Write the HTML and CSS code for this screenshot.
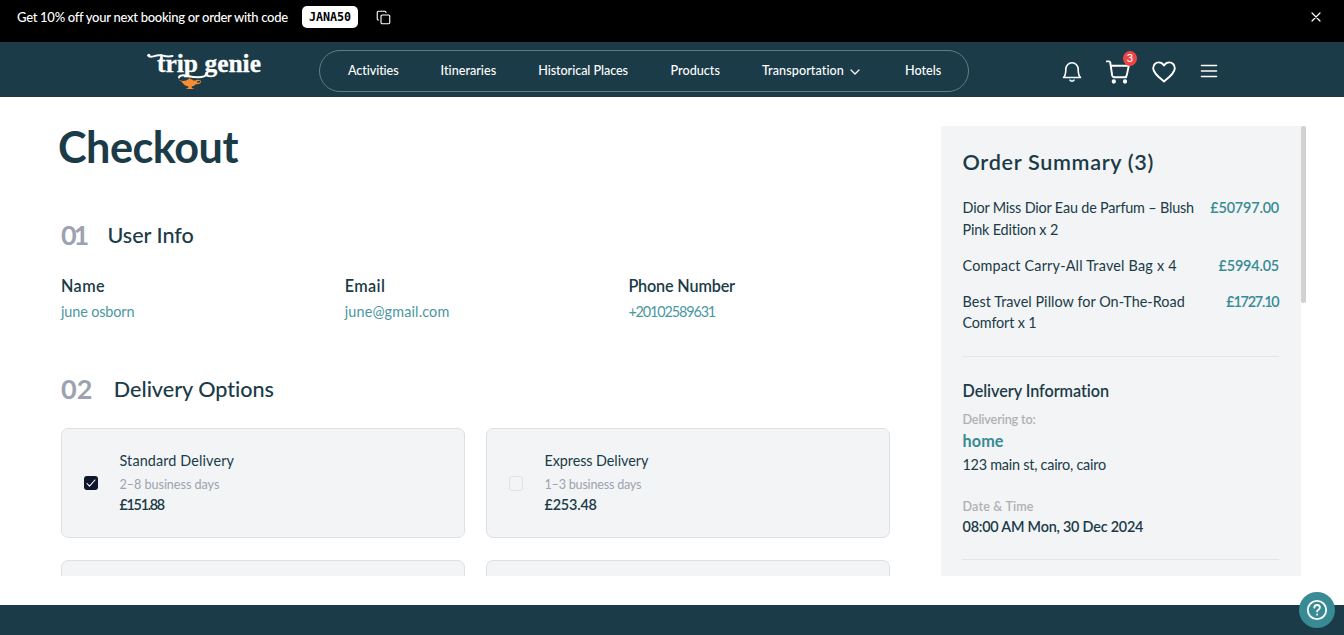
FILE: index.html
```html
<!DOCTYPE html>
<html lang="en">
<head>
<meta charset="utf-8">
<title>Checkout – Trip Genie</title>
<link rel="stylesheet" href="styles.css">
</head>
<body>
<div class="promo">
  <span class="promo-text">Get 10% off your next booking or order with code</span>
  <span class="code">JANA50</span>
  <svg class="copy" viewBox="0 0 24 24"><rect x="8" y="8" width="14" height="14" rx="2"/><path d="M4 16c-1.100 0-2-.9-2-2V4c0-1.100.9-2 2-2h10c1.100 0 2 .9 2 2"/></svg>
  <svg class="close" viewBox="0 0 10 10"><path d="M1 1l8 8M9 1L1 9"/></svg>
</div>
<header class="header">
  <svg class="logo" viewBox="144 48 120 46">
    <text class="logo-text" x="157" y="71.500" textLength="104" lengthAdjust="spacingAndGlyphs">trip genie</text>
    <circle class="swash-dot" cx="148.800" cy="55.300" r="1.600"/>
    <path class="swash" d="M149 56.300c3 1.500 6-1.300 10.500-1 4 .2 7 2 13 .7"/>
    <path class="swash" d="M161.300 55v6"/>
    <path class="swash" d="M179 77.500c0-2 4-2.800 8-1.800 6 1.500 13 2.500 17.500.5 2-1 2.500-2.200 2-3.500"/>
    <path class="lamp" d="M178 79.500l4.500 1.500 4-.5c.5-1 1.500-1.200 2.500-1.200l.8-2 .8 2c1 0 2 .2 2.500 1.200h2.500c1.500-1.500 5.800-1 5.500 1.200-.2 2-3.300 2.700-5.300 2.600-1.200 1.400-2.700 2-4.300 2.200l.5 1.500 2.500 1h-9l2.500-1 .5-1.500c-4-.5-5.500-3-7-5zM197 82.800c1.500 0 3.300-.5 3.400-1.400 0-.9-2-1-3.100-.1z"/>
  </svg>
  <nav class="nav">
    <a class="nav-activities">Activities</a>
    <a>Itineraries</a>
    <a class="nav-places">Historical Places</a>
    <a>Products</a>
    <a class="nav-transport">Transportation<svg class="chevron" viewBox="0 0 10 6"><path d="M1 1l4 4 4-4"/></svg></a>
    <a>Hotels</a>
  </nav>
  <div class="actions">
    <svg class="bell" viewBox="0 0 20 22"><path d="M1.500 16.500c1.800-1.500 2.300-3.500 2.300-8A6.200 6.500 0 0 1 10 1.800a6.200 6.500 0 0 1 6.200 6.700c0 4.500.5 6.500 2.300 8z"/><path d="M8 19.200c.8 1.300 3.200 1.300 4 0"/></svg>
    <span class="cart">
      <svg viewBox="0 0 24 24"><path d="M.8 1.400h2.300c.7 0 1 .4 1.100 1l2 13.100c.2 1.100.8 1.700 1.900 1.700h12M4.800 5.800h18l-2 9.200c-.3 1.400-1 2.200-2.200 2.200"/><circle cx="7.800" cy="21.500" r="1.200"/><circle cx="19" cy="21.500" r="1.200"/></svg>
      <span class="badge">3</span>
    </span>
    <svg class="heart" viewBox="0 0 24 22"><path d="M12 20.500C6.500 15.800 1.200 12 1.200 7.300c0-3.500 2.600-5.900 5.500-5.900 2.200 0 4 1 5.300 3 1.300-2 3.100-3 5.300-3 2.900 0 5.500 2.400 5.500 5.900 0 4.700-5.300 8.500-10.800 13.200z"/></svg>
    <svg class="menu" viewBox="0 0 18 14"><path d="M1.500 1.500h15M1.500 7h15M1.500 12.500h15"/></svg>
  </div>
</header>
<main class="main">
  <section class="checkout">
    <h1>Checkout</h1>
    <div class="step step-user"><span class="num num-one">01</span><h2>User Info</h2></div>
    <div class="fields">
      <div><h3 class="roomy">Name</h3><p>june osborn</p></div>
      <div><h3 class="roomy">Email</h3><p class="mail">june@gmail.com</p></div>
      <div><h3 class="phone-title">Phone Number</h3><p class="phone">+20102589631</p></div>
    </div>
    <div class="step step-delivery"><span class="num">02</span><h2>Delivery Options</h2></div>
    <div class="options">
      <div class="card">
        <span class="box checked"><svg viewBox="0 0 14 14"><path d="M3 7.500l2.500 2.700L11 4"/></svg></span>
        <div class="card-text"><h4 class="std">Standard Delivery</h4><small>2–8 business days</small><b class="price-std">£151.88</b></div>
      </div>
      <div class="card">
        <span class="box"></span>
        <div class="card-text"><h4>Express Delivery</h4><small class="days-exp">1–3 business days</small><b>£253.48</b></div>
      </div>
      <div class="card"></div>
      <div class="card"></div>
    </div>
  </section>
  <aside class="summary">
    <div class="panel">
      <h2>Order Summary (3)</h2>
      <ul class="items">
        <li><span class="item-tight">Dior Miss Dior Eau de Parfum – Blush<br>Pink Edition x 2</span><b>£50797.00</b></li>
        <li><span class="item-wide">Compact Carry-All Travel Bag x 4</span><b>£5994.05</b></li>
        <li><span class="item-mid">Best Travel Pillow for On-The-Road<br><i>Comfort x 1</i></span><b class="price-third">£1727.10</b></li>
      </ul>
      <div class="delivery">
        <h3>Delivery Information</h3>
        <p class="label">Delivering to:</p>
        <p class="place">home</p>
        <p class="address">123 main st, cairo, cairo</p>
        <p class="label label-date">Date &amp; Time</p>
        <p class="date">08:00 AM Mon, 30 Dec 2024</p>
      </div>
    </div>
    <div class="scrollbar"><div class="thumb"></div></div>
  </aside>
</main>
<footer class="footer"></footer>
<button class="help"><svg viewBox="0 0 22 22"><circle cx="11" cy="11" r="9.200"/><path d="M8.300 8.600c.2-3.500 5.600-3.400 5.600 0 0 2.100-2.800 2.200-2.800 4"/><path d="M11.100 15.300v.4"/></svg></button>
</body>
</html>
```
FILE: styles.css
```css
* { box-sizing: border-box; margin: 0; }
body {
  height: 635px;
  overflow: hidden;
  display: flex;
  flex-direction: column;
  background: #fff;
  color: #1a3b47;
  font-family: Lato, sans-serif;
  font-size: 14.4px;
  font-variant-ligatures: none;
}
svg { display: block; fill: none; stroke: currentColor; stroke-linecap: round; stroke-linejoin: round; }

/* Promo strip */
.promo {
  height: 42px;
  padding: 6px 27px 0 17px;
  display: flex;
  align-items: flex-start;
  background: #000;
  color: #fff;
}
.promo-text { width: 285px; font-size: 13px; font-weight: 500; line-height: 22px; letter-spacing: -.28px; white-space: nowrap; }
.code {
  width: 56px;
  height: 22px;
  border-radius: 5px;
  background: #fff;
  color: #000;
  font: bold 11.7px/22px "DejaVu Sans Mono", monospace;
  text-align: center;
}
.copy { width: 15px; height: 15px; margin: 4px 0 0 18px; stroke-width: 1.8; }
.close { width: 10px; height: 10px; margin: 6px -4px 0 auto; stroke-width: 1.2; }

/* Navigation */
.header { height: 55px; display: flex; background: #1a3b47; color: #fff; padding-left: 144px; }
.logo { width: 120px; height: 46px; margin-top: 6px; }
.logo-text { font: bold 24.500px "Liberation Serif", serif; fill: #fff; stroke: #fff; stroke-width: .3; }
.swash { stroke: #fff; stroke-width: 2; }
.swash-dot { fill: #fff; stroke: none; }
.lamp { fill: #f88c33; fill-rule: evenodd; stroke: none; }
.nav {
  width: 650px;
  height: 42px;
  margin: 8px 0 0 55px;
  padding: 0 0 0 28px;
  border: 1px solid #647b84;
  border-radius: 21px;
  display: flex;
  gap: 42px;
  align-items: center;
  font-size: 12.6px;
  font-weight: 500;
  line-height: 20px;
  letter-spacing: .02px;
}
.nav a { display: flex; align-items: center; white-space: nowrap; }
.nav-activities { letter-spacing: -.09px; }
.nav .nav-places { margin-right: .5px; letter-spacing: -.06px; }
.nav .nav-transport { letter-spacing: .08px; margin-right: 2.500px; }
.chevron { width: 10px; height: 6px; margin: 1px 0 0 6.500px; stroke-width: 1.2; }
.actions { display: flex; margin-left: 93px; }
.bell { width: 20px; height: 22px; margin-top: 19px; stroke-width: 1.6; }
.cart { position: relative; width: 24px; height: 24px; margin: 18px 0 0 24px; }
.cart svg { width: 24px; height: 24px; stroke-width: 1.9; }
.cart circle { fill: currentColor; }
.badge {
  position: absolute;
  left: 17px;
  top: -9px;
  width: 14px;
  height: 15px;
  border-radius: 50%;
  background: #ef4444;
  font: 11px/15px Inter, sans-serif;
  text-align: center;
}
.heart { width: 24px; height: 22px; margin: 19px 0 0 21.500px; stroke-width: 1.9; }
.menu { width: 18px; height: 14px; margin: 22px 0 0 24.500px; stroke-width: 1.6; }

/* Page body */
.main { height: 508px; padding: 29px 38px 29px 61px; display: flex; justify-content: space-between; }
.checkout { width: 829px; height: 450px; padding-top: 1px; }
h1 { margin-left: -3px; font-size: 43.2px; font-weight: 700; line-height: 39px; letter-spacing: -.5px; }
h2 { font-size: 21.6px; font-weight: 500; line-height: 32px; letter-spacing: -.02px; }
h3 { font-size: 16.2px; font-weight: 600; line-height: 24px; letter-spacing: -.05px; }
.step { height: 32px; display: flex; align-items: center; }
.step-user { margin-top: 53px; }
.step-delivery { margin-top: 50px; }
.num { margin-right: 21.500px; color: #9ca3af; font-size: 27px; font-weight: 700; line-height: 32px; }
.num-one { letter-spacing: -3.200px; }
.fields { margin-top: 23px; display: grid; grid-template-columns: repeat(3, 283.7px); }
.fields p { margin-top: 3px; color: #4a98a1; line-height: 22px; font-weight: 400; letter-spacing: -.12px; }
.fields .roomy { letter-spacing: .4px; }
.fields .mail { letter-spacing: .15px; }
.fields .phone-title { letter-spacing: -.15px; }
.fields .phone { letter-spacing: -1.120px; }

.options {
  height: 148px;
  margin-top: 23px;
  display: grid;
  grid-template-columns: 1fr 1fr;
  grid-auto-rows: 110px;
  gap: 22px 21px;
  overflow: hidden;
}
.card { padding-left: 22px; border: 1px solid #dde1e6; border-radius: 7px; background: #f3f4f6; display: flex; align-items: center; }
.box { width: 14px; height: 15px; border: 1px solid #e0e2e6; border-radius: 3px; }
.checked { height: 14px; border: 0; background: #0f172a; color: #fff; }
.checked svg { width: 14px; height: 14px; stroke-width: 1.1; }
.card-text { margin-left: 21.500px; padding-bottom: 1px; }
.card-text > * { display: block; }
h4 { font-size: 14.4px; font-weight: 400; line-height: 22px; letter-spacing: -.08px; }
.std { letter-spacing: .12px; }
small { margin-top: 4px; color: #9ca3af; font-size: 12.6px; line-height: 18px; letter-spacing: -.04px; }
.days-exp { letter-spacing: -.22px; }
b { font-weight: 600; letter-spacing: -.17px; }
.card-text b { line-height: 21px; }
.card-text .price-std { letter-spacing: -1.300px; }

/* Order summary */
.summary { display: flex; height: 450px; }
.panel { width: 360px; padding: 21px 22px 0 21px; background: #f3f4f6; }
.panel h2 { padding-left: .5px; font-weight: 600; line-height: 30px; letter-spacing: .68px; }
.items { margin-top: 20.300px; padding: 0 0 21.700px .5px; border-bottom: 1px solid #dfe8ee; list-style: none; display: grid; gap: 14.4px; line-height: 21.6px; }
.items li { display: flex; justify-content: space-between; white-space: nowrap; }
.items b { color: #388a94; }
.items .price-third { margin-right: .5px; letter-spacing: -1.200px; }
.items i { font-style: normal; letter-spacing: -.15px; }
.item-tight { letter-spacing: -.17px; }
.item-wide { letter-spacing: .2px; }
.item-mid { letter-spacing: .05px; }
.delivery { padding: 22px 0 22px .5px; border-bottom: 1px solid #e2e5e8; }
.label { margin-top: 8px; color: #b0b0b0; font-size: 12.6px; font-weight: 600; line-height: 18px; letter-spacing: -.13px; }
.place { color: #388a94; font-size: 16.2px; font-weight: 700; line-height: 24px; letter-spacing: .1px; }
.address { margin-top: 1px; line-height: 22px; letter-spacing: -.24px; }
.label-date { margin-top: 22px; letter-spacing: .15px; }
.date { font-weight: 600; line-height: 21px; letter-spacing: -.22px; }
.scrollbar { width: 5px; }
.thumb { height: 177px; border-radius: 2px; background: #d1d1d1; }

.footer { height: 30px; background: #1a3b47; }
.help {
  position: absolute;
  left: 1299px;
  top: 592px;
  width: 36px;
  height: 36px;
  padding: 0;
  border: 0;
  border-radius: 50%;
  background: #388a94;
  color: #fff;
  display: grid;
  place-items: center;
}
.help svg { width: 22px; height: 22px; stroke-width: 1.800; }
```
